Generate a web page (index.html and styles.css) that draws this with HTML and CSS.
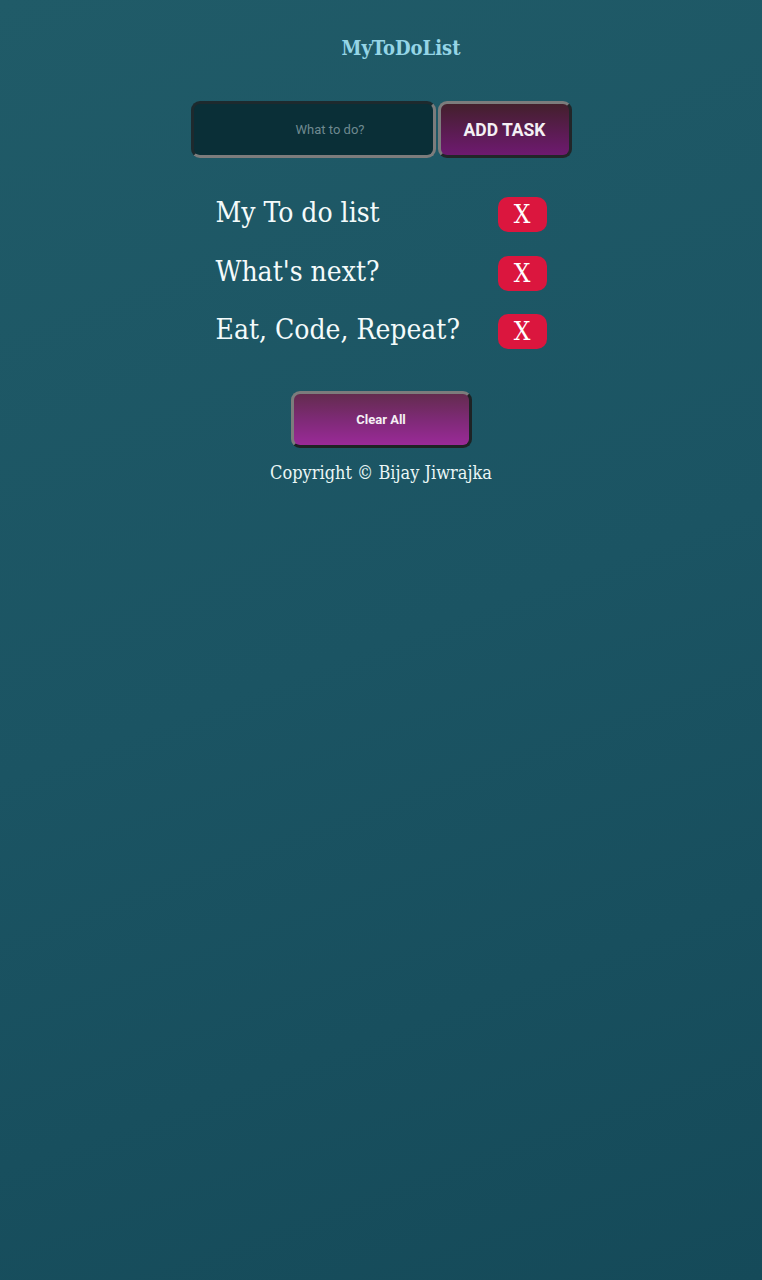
FILE: index.html
```html
<!DOCTYPE html>
<html lang="en">
<head>
<meta charset="utf-8">
<title>MyToDoList</title>
<link rel="stylesheet" href="styles.css">
</head>
<body>
<main class="app">
  <h1 class="title">MyToDoList</h1>
  <form class="add-form">
    <input class="task-input" type="text" placeholder="What to do?">
    <button class="add-btn" type="button">ADD TASK</button>
  </form>
  <ul class="list">
    <li class="item"><span class="item-text">My To do list</span><button class="del-btn" type="button">X</button></li>
    <li class="item"><span class="item-text">What's next?</span><button class="del-btn" type="button">X</button></li>
    <li class="item"><span class="item-text">Eat, Code, Repeat?</span><button class="del-btn" type="button">X</button></li>
  </ul>
  <button class="clear-btn" type="button">Clear All</button>
  <p class="copyright">Copyright © Bijay Jiwrajka</p>
</main>
</body>
</html>
```
FILE: styles.css
```css
html, body {
  margin: 0;
  padding: 0;
}
body {
  min-height: 1280px;
  background: linear-gradient(160deg, #205b68 0%, #1b5463 50%, #154a59 100%);
  font-family: "DejaVu Serif", serif;
  color: #f2fbfb;
}
.app {
  display: flex;
  flex-direction: column;
  align-items: center;
  padding-top: 36px;
}
.title {
  margin: 0 0 0 40px;
  font-size: 20px;
  line-height: 24px;
  font-weight: bold;
  font-stretch: condensed;
  color: #95d5e6;
}
.add-form {
  display: flex;
  gap: 2px;
  margin-top: 41px;
}
.task-input {
  box-sizing: border-box;
  width: 245px;
  height: 57px;
  border-radius: 9px;
  border: 3px solid;
  border-color: #1d2a2e #7c7c7c #7c7c7c #1d2a2e;
  background: #0a2f37;
  color: #ddd;
  text-align: center;
  padding: 0 0 0 34px;
  font-family: Roboto, sans-serif;
  font-size: 13px;
  outline: none;
}
.task-input::placeholder {
  color: #6f8a90;
}
.add-btn {
  box-sizing: border-box;
  width: 134px;
  height: 57px;
  border-radius: 9px;
  border: 3px solid;
  border-color: #7c7c7c #222629 #222629 #7c7c7c;
  background: linear-gradient(180deg, #43202c 0%, #5b1c52 55%, #6e1a70 100%);
  color: #f4f0f4;
  font-family: Roboto, sans-serif;
  font-weight: bold;
  font-size: 17.5px;
}
.list {
  list-style: none;
  margin: 39px 0 0;
  padding: 0;
  width: 331px;
  display: flex;
  flex-direction: column;
  gap: 23.5px;
}
.item {
  display: flex;
  justify-content: space-between;
  align-items: center;
  height: 35px;
}
.item-text {
  font-size: 28px;
  font-stretch: condensed;
  color: #f4fbfb;
  position: relative;
  top: -2px;
}
.del-btn {
  width: 49px;
  height: 35px;
  border: none;
  border-radius: 10px;
  background: #db163e;
  color: #fff;
  font-family: "DejaVu Serif", serif;
  font-stretch: condensed;
  font-size: 26px;
  padding: 0;
  line-height: 35px;
}
.clear-btn {
  box-sizing: border-box;
  margin-top: 42px;
  width: 181px;
  height: 57px;
  border-radius: 9px;
  border: 3px solid;
  border-color: #7c7c7c #1e2325 #1e2325 #7c7c7c;
  background: linear-gradient(180deg, #632c4e 0%, #7e2a76 50%, #9a2a98 100%);
  color: #f4f0f4;
  font-family: Roboto, sans-serif;
  font-weight: bold;
  font-size: 13px;
}
.copyright {
  margin: 13px 0 0;
  font-size: 18px;
  line-height: 24px;
  font-stretch: condensed;
  color: #eaf6f6;
}
```
